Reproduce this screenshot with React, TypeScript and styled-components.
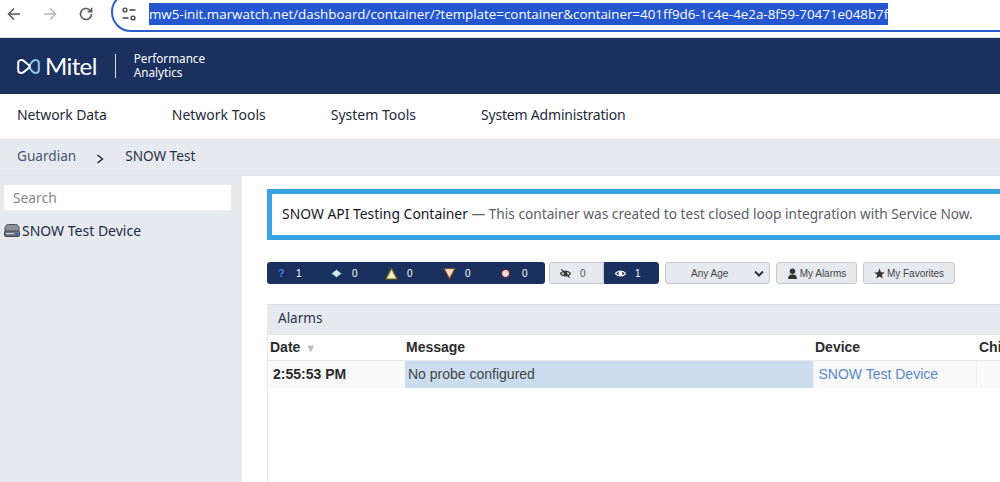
import React from "react";
import styled, { createGlobalStyle } from "styled-components";

const Global = createGlobalStyle`
  html, body { margin: 0; padding: 0; background: #fff; overflow: hidden; }
  body { font-family: "Noto Sans", sans-serif; width: 1000px; height: 482px; }
`;

const Page = styled.div`
  width: 1000px; height: 482px; overflow: hidden; display: flex; flex-direction: column;
`;
const BrowserBar = styled.div`
  height: 37px; flex: none; display: flex; align-items: center; background: #fff;
  border-bottom: 1px solid #e3e3e3; box-sizing: content-box; overflow: hidden;
`;
const NavIcon = styled.svg`
  width: 16px; height: 16px; flex: none; margin-top: -9px;
`;
const NavIcons = styled.div`
  display: flex; gap: 20px; padding-left: 6px; width: 111px; box-sizing: border-box; flex: none; align-items: center; height: 100%;
`;
const Omnibox = styled.div`
  flex: none; width: 1000px; height: 40px; margin-top: -13px; border: 2px solid #2b5ccf;
  border-radius: 22px; box-sizing: border-box; display: flex; align-items: center; padding: 4px 0 0 8px;
`;
const Tune = styled.svg`
  width: 16px; height: 16px; flex: none; margin-right: 12px;
`;
const Url = styled.span`
  font-family: "Open Sans", sans-serif; font-size: 13.37px; line-height: 22px; color: #fff; background: #2456d0;
  white-space: nowrap;
`;

const Header = styled.header`
  height: 56px; flex: none; background: #1a305e; display: flex; align-items: center; padding-left: 17px;
`;
const LogoMark = styled.svg`
  width: 23px; height: 17px; flex: none; margin-right: 5px;
`;
const LogoWord = styled.span`
  font-family: "Lato", sans-serif; font-weight: 400; font-size: 24px; color: #fff; line-height: 1; letter-spacing: -0.6px;
`;
const LogoDivider = styled.div`
  width: 1px; height: 24px; background: #d8dde8; margin: 0 18px;
`;
const Product = styled.div`
  font-family: "Noto Sans", sans-serif; font-size: 11.7px; line-height: 14px; color: #fff; margin-top: -2px;
`;
const MainNav = styled.nav`
  flex: none; background: #fff; display: flex; align-items: center; padding: 0 0 4px 17px; gap: 65px;
  border-bottom: 1px solid #dfe2e7; box-sizing: content-box; height: 41px;
`;
const NavItem = styled.a<{ $track?: number }>`
  font-size: 14px; color: #252a3a; white-space: nowrap; letter-spacing: ${p => p.$track ?? 0}px;
`;
const Crumbs = styled.div`
  height: 36px; flex: none; background: #e6e9ee; display: flex; align-items: center; padding: 0 0 4px 17px;
  border-bottom: 1px solid #e0e3e8; box-sizing: border-box; font-size: 13.6px;
`;
const Crumb = styled.span<{ $current?: boolean }>`
  color: ${p => (p.$current ? "#2b2f45" : "#4a5672")};
`;
const CrumbSep = styled.svg`
  width: 8px; height: 10px; margin: 6px 21px 0 20px; flex: none;
`;
const Body = styled.div`
  flex: 1; display: flex; min-height: 0;
`;
const Sidebar = styled.aside`
  width: 242px; flex: none; background: #e6e9ee; padding: 9px 11px 0 4px; box-sizing: border-box;
`;
const SearchBox = styled.div`
  height: 26px; background: #fff; border-bottom: 1px solid #eceef1; box-sizing: border-box; display: flex; align-items: center;
  padding: 0 0 1px 9px; font-size: 13.8px; color: #85878c;
`;
const TreeItem = styled.div`
  display: flex; align-items: center; margin-top: 10px; font-size: 14px; color: #1e2a4a; gap: 2px; white-space: nowrap;
`;
const DeviceIcon = styled.svg`
  width: 16px; height: 15px; flex: none;
`;
const Main = styled.main`
  flex: 1; padding: 13px 0 0 25px; min-width: 0; overflow: hidden; display: flex; flex-direction: column;
`;
const Banner = styled.div`
  height: 51px; width: 760px; flex: none; border: 5px solid #36a3e2; border-right: none; box-sizing: border-box; display: flex;
  align-items: center; padding: 0 0 2px 10px; font-size: 13.7px; white-space: nowrap; color: #5b5e68;
`;
const BannerTitle = styled.span`
  color: #14171f; font-size: 13.9px;
`;
const Toolbar = styled.div`
  display: flex; margin-top: 22px; height: 22px; flex: none; align-items: stretch;
`;
const StatusGroup = styled.div`
  width: 278px; background: #1a305e; border-radius: 3px; display: flex; flex: none; font-family: "Liberation Sans", sans-serif; font-size: 10px; font-weight: 400; color: #fff;
  align-items: center;
`;
const StatusCell = styled.div<{ $w: number; $iconLeft: number; $gap: number }>`
  width: ${p => p.$w}px; flex: none; display: flex; align-items: center; padding-left: ${p => p.$iconLeft}px; gap: ${p => p.$gap}px; box-sizing: border-box;
`;
const Question = styled.span`
  color: #4f79e8; font-weight: 700; font-size: 11px; width: 6px;
`;
const Glyph = styled.svg`
  width: 13px; height: 13px; flex: none;
`;
const Visibility = styled.div`
  display: flex; margin-left: 4px; flex: none; font-family: "Liberation Sans", sans-serif; font-size: 10px;
`;
const VisBtn = styled.div<{ $on?: boolean }>`
  width: 55px; box-sizing: border-box; display: flex; align-items: center; gap: 9px;
  padding-left: 10px; color: ${p => (p.$on ? "#fff" : "#555")}; background: ${p => (p.$on ? "#1a305e" : "#e6e9ee")};
  border: 1px solid ${p => (p.$on ? "#1a305e" : "#c6c8cc")}; border-radius: ${p => (p.$on ? "0 3px 3px 0" : "3px 0 0 3px")};
`;
const AgeSelect = styled.div`
  width: 105px; margin-left: 6px; box-sizing: border-box; border: 1px solid #c6c8cc; border-radius: 3px; background: #e6e9ee; display: flex; align-items: center; justify-content: space-between;
  padding: 0 0 0 25px; font-family: "Liberation Sans", sans-serif; font-size: 10px; color: #444;
`;
const Chevron = styled.svg`
  width: 10px; height: 7px; margin-right: 5px;
`;
const ToolBtn = styled.div<{ $w: number }>`
  width: ${p => p.$w}px; margin-left: 6px; box-sizing: border-box; border: 1px solid #c6c8cc; border-radius: 3px; background: #e6e9ee; display: flex; align-items: center; justify-content: center;
  gap: 2px; font-family: "Liberation Sans", sans-serif; font-size: 10px; color: #444;
`;
const BtnIcon = styled.svg`
  width: 11px; height: 11px; flex: none;
`;
const Panel = styled.section`
  margin-top: 20px; flex: 1; border-left: 1px solid #e6e9ee; width: 760px; box-sizing: border-box;
`;
const PanelHead = styled.div`
  height: 31px; background: #e6e9ee; border-top: 1px solid #dcdfe4; box-sizing: border-box; padding: 0 0 5px 10px; display: flex; align-items: center;
  font-size: 13.5px; color: #2a3350;
`;
const Table = styled.table`
  border-collapse: collapse; table-layout: fixed; width: 759px; font-family: "Liberation Sans", sans-serif; font-size: 14px;
`;
const Th = styled.th<{ $w: number; $pad: number }>`
  width: ${p => p.$w}px; height: 25px; padding: 0 0 0 ${p => p.$pad}px; text-align: left; color: #2b2b2b; font-weight: 700; font-size: 14px; border-bottom: 1px solid #e6e8ea;
  box-sizing: border-box; white-space: nowrap;
`;
const SortMark = styled.span`
  color: #b9bcc0; font-size: 11px; margin-left: 5px;
`;
const Td = styled.td<{ $tone?: string; $pad?: number }>`
  height: 28px; padding: 0 0 0 ${p => p.$pad ?? 5}px; white-space: nowrap; background: ${p => p.$tone || "#f9f9f9"}; color: #444; box-sizing: border-box;
  border-right: 1px solid #eef0f2;
`;
const TimeCell = styled(Td)`
  font-weight: 700; color: #2b2b2b; border-right: none;
`;
const DeviceLink = styled.a`
  color: #5787cc;
`;

const Arrow = ({ dir, color }: { dir: "l" | "r"; color: string }) => (
  <NavIcon viewBox="0 0 16 16" fill="none" stroke={color} strokeWidth="1.6">
    {dir === "l" ? <path d="M14 8H2.500M8 2.500 2.500 8 8 13.500" /> : <path d="M2 8h11.500M8 2.500 13.500 8 8 13.500" />}
  </NavIcon>
);

export default function App() {
  return (
    <Page>
      <Global />
      <BrowserBar>
        <NavIcons>
          <Arrow dir="l" color="#5a5a5a" />
          <Arrow dir="r" color="#b8b8b8" />
          <NavIcon viewBox="0 0 16 16" fill="none" stroke="#5a5a5a" strokeWidth="1.6">
            <path d="M13.500 8A5.500 5.500 0 1 1 11.600 3.800L13.500 5.600M13.600 1.800v4h-4" />
          </NavIcon>
        </NavIcons>
        <Omnibox>
          <Tune viewBox="0 0 16 16" fill="none" stroke="#444" strokeWidth="1.4">
            <circle cx="4" cy="4" r="1.900" />
            <path d="M8.500 4h6M1.500 12h6" />
            <circle cx="12" cy="12" r="1.900" />
          </Tune>
          <Url>mw5-init.marwatch.net/dashboard/container/?template=container&amp;container=401ff9d6-1c4e-4e2a-8f59-70471e048b7f</Url>
        </Omnibox>
      </BrowserBar>
      <Header>
        <LogoMark viewBox="0 0 23 17" fill="none">
          <path d="M11.500 8.500 15.500 3.500C17.500 1.300 21.800 1.500 21.800 5V12C21.800 15.500 17.500 15.700 15.500 13.500L11.500 8.500" stroke="#8ccbf0" strokeWidth="2" />
          <path d="M13.500 8.500 7.500 3.500C5.500 1.300 1.200 1.500 1.200 5V12C1.200 15.500 5.500 15.700 7.500 13.500L13.500 8.500" stroke="#fff" strokeWidth="2" />
        </LogoMark>
        <LogoWord>Mitel</LogoWord>
        <LogoDivider />
        <Product>Performance<br />Analytics</Product>
      </Header>
      <MainNav>
        <NavItem $track={-0.1}>Network Data</NavItem>
        <NavItem>Network Tools</NavItem>
        <NavItem>System Tools</NavItem>
        <NavItem $track={-0.2}>System Administration</NavItem>
      </MainNav>
      <Crumbs>
        <Crumb>Guardian</Crumb>
        <CrumbSep viewBox="0 0 8 10" fill="none" stroke="#222" strokeWidth="1.400"><path d="M1.500 1 6.500 5 1.500 9" /></CrumbSep>
        <Crumb $current>SNOW Test</Crumb>
      </Crumbs>
      <Body>
        <Sidebar>
          <SearchBox>Search</SearchBox>
          <TreeItem>
            <DeviceIcon viewBox="0 0 16 15" fill="none">
              <path d="M1 8V5C1 3 2.500 1.500 4.500 1.500h7C13.500 1.500 15 3 15 5v3" fill="#8b919a" stroke="#4a505a" strokeWidth="1" />
              <rect x=".5" y="8" width="15" height="5.500" rx="1.200" fill="#6e757f" stroke="#3f4550" strokeWidth="1" />
              <path d="M2 10.500h8" stroke="#d7dbe0" strokeWidth="1" />
              <circle cx="13" cy="11.500" r="1.300" fill="#3a5fc0" />
            </DeviceIcon>
            SNOW Test Device
          </TreeItem>
        </Sidebar>
        <Main>
          <Banner>
            <BannerTitle>SNOW API Testing Container</BannerTitle>&nbsp;— This container was created to test closed loop integration with Service Now.
          </Banner>
          <Toolbar>
            <StatusGroup>
              <StatusCell $w={55} $iconLeft={11} $gap={12}><Question>?</Question>1</StatusCell>
              <StatusCell $w={56} $iconLeft={8} $gap={9}>
                <Glyph viewBox="0 0 13 13"><path d="M6.500 2.500 11.500 6.500 6.500 10.500 1.500 6.500Z" fill="#d7ecea" stroke="#1f6a6a" strokeWidth=".7" /></Glyph>
                0
              </StatusCell>
              <StatusCell $w={57} $iconLeft={7} $gap={9}>
                <Glyph viewBox="0 0 13 13"><path d="M6.500 1.500 12 12H1Z" fill="#f1eebf" stroke="#6f6e1c" strokeWidth="1.200" /></Glyph>
                0
              </StatusCell>
              <StatusCell $w={57} $iconLeft={8} $gap={9}>
                <Glyph viewBox="0 0 13 13"><path d="M6.500 12 12 1.500H1Z" fill="#f3dcc2" stroke="#7d431a" strokeWidth="1.200" /></Glyph>
                0
              </StatusCell>
              <StatusCell $w={53} $iconLeft={7} $gap={10}>
                <Glyph viewBox="0 0 13 13"><circle cx="6.500" cy="6.500" r="4" fill="#eedcdc" stroke="#6d1b26" strokeWidth="1.200" /></Glyph>
                0
              </StatusCell>
            </StatusGroup>
            <Visibility>
              <VisBtn>
                <BtnIcon viewBox="0 0 12 12" fill="none" stroke="#333" strokeWidth="1.300">
                  <path d="M.5 6c2.500-3.500 8.500-3.500 11 0-2.500 3.500-8.500 3.500-11 0Z" /><circle cx="6" cy="6" r="1.500" fill="#333" /><path d="M1.500 1.500l9 9" />
                </BtnIcon>
                0
              </VisBtn>
              <VisBtn $on>
                <BtnIcon viewBox="0 0 12 12" fill="none" stroke="#fff" strokeWidth="1.300">
                  <path d="M.5 6c2.500-3.500 8.500-3.500 11 0-2.500 3.500-8.500 3.500-11 0Z" /><circle cx="6" cy="6" r="1.500" fill="#fff" />
                </BtnIcon>
                1
              </VisBtn>
            </Visibility>
            <AgeSelect>
              Any Age
              <Chevron viewBox="0 0 10 7" fill="none" stroke="#333" strokeWidth="2"><path d="M1 1.500 5 5.500 9 1.500" /></Chevron>
            </AgeSelect>
            <ToolBtn $w={81}>
              <BtnIcon viewBox="0 0 10 10" fill="#333"><circle cx="5" cy="3" r="2.500" /><path d="M1 10c0-3 1.500-4 4-4s4 1 4 4Z" /></BtnIcon>
              My Alarms
            </ToolBtn>
            <ToolBtn $w={92}>
              <BtnIcon viewBox="0 0 10 10" fill="#333"><path d="M5 .5 6.300 3.800 9.800 4 7.100 6.200 8 9.600 5 7.700 2 9.600 2.900 6.200.2 4 3.700 3.800Z" /></BtnIcon>
              My Favorites
            </ToolBtn>
          </Toolbar>
          <Panel>
            <PanelHead>Alarms</PanelHead>
            <Table>
              <thead>
                <tr>
                  <Th $w={137} $pad={2}>Date<SortMark>▼</SortMark></Th>
                  <Th $w={408} $pad={1}>Message</Th>
                  <Th $w={163} $pad={2}>Device</Th>
                  <Th $w={51} $pad={3}>Chi</Th>
                </tr>
              </thead>
              <tbody>
                <tr>
                  <TimeCell>2:55:53 PM</TimeCell>
                  <Td $tone="#cbdcef" $pad={3}>No probe configured</Td>
                  <Td><DeviceLink>SNOW Test Device</DeviceLink></Td>
                  <Td />
                </tr>
              </tbody>
            </Table>
          </Panel>
        </Main>
      </Body>
    </Page>
  );
}
